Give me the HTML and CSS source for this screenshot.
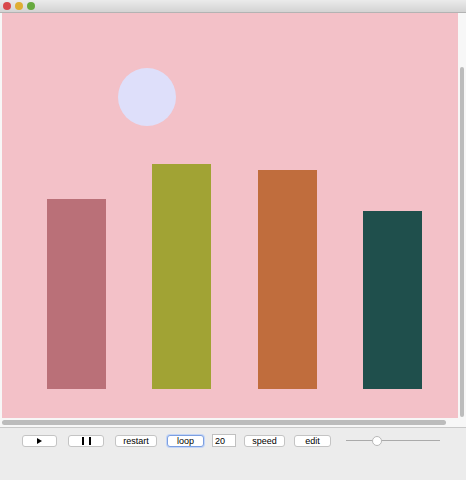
FILE: index.html
```html
<!DOCTYPE html>
<html>
<head>
<meta charset="utf-8">
<link rel="stylesheet" href="styles.css">
</head>
<body>
<div class="window">
  <div class="titlebar">
    <span class="light red"></span>
    <span class="light yellow"></span>
    <span class="light green"></span>
  </div>
  <div class="scrollpane">
    <div class="viewcol">
      <div class="canvas">
        <div class="shape circle"></div>
        <div class="shape bar bar1"></div>
        <div class="shape bar bar2"></div>
        <div class="shape bar bar3"></div>
        <div class="shape bar bar4"></div>
      </div>
      <div class="hscroll"><div class="hthumb"></div></div>
    </div>
    <div class="vscroll"><div class="vthumb"></div></div>
  </div>
  <div class="controls">
    <button class="btn w-play"><span class="play-icon"></span></button>
    <button class="btn w-pause ml11"><span class="pause-icon"><i></i><i></i></span></button>
    <button class="btn w-restart ml11">restart</button>
    <button class="btn w-loop focused ml10">loop</button>
    <input class="field ml8" type="text" value="20">
    <button class="btn w-speed ml8">speed</button>
    <button class="btn w-edit ml9">edit</button>
    <div class="slider ml15"><div class="track"></div><div class="knob"></div></div>
  </div>
</div>
</body>
</html>
```
FILE: styles.css
```css
* { box-sizing: border-box; }
html, body { margin: 0; padding: 0; }
body {
  width: 466px;
  height: 480px;
  overflow: hidden;
  font-family: "Liberation Sans", Arial, sans-serif;
  background: #ececec;
}
.window {
  width: 466px;
  height: 480px;
  display: flex;
  flex-direction: column;
}
.titlebar {
  height: 13px;
  background: linear-gradient(#ebebeb, #d3d3d3);
  border-bottom: 1px solid #b3b3b3;
  display: flex;
  align-items: center;
  padding-left: 3px;
  gap: 4px;
}
.light {
  width: 8px;
  height: 8px;
  border-radius: 50%;
  display: block;
}
.red { background: #d8484a; }
.yellow { background: #dfae32; }
.green { background: #67a93e; }

.scrollpane {
  height: 415px;
  display: flex;
  background: #f7f7f7;
  border-bottom: 1px solid #c9c9c9;
}
.viewcol {
  width: 458px;
  display: flex;
  flex-direction: column;
  padding-left: 2px;
}
.canvas {
  position: relative;
  height: 405px;
  background: #f3c1c8;
  overflow: hidden;
}
.shape { position: absolute; }
.circle {
  left: 116px;
  top: 55px;
  width: 58px;
  height: 58px;
  border-radius: 50%;
  background: #dedffa;
}
.bar { bottom: 29px; width: 59px; }
.bar1 { left: 45px; height: 190px; background: #ba7078; }
.bar2 { left: 150px; height: 225px; background: #a1a334; }
.bar3 { left: 256px; height: 219px; background: #c06d3d; }
.bar4 { left: 361px; height: 178px; background: #1f4f4c; }

.hscroll {
  flex: 1;
  display: flex;
  align-items: center;
}
.hthumb {
  width: 444px;
  height: 5px;
  border-radius: 3px;
  background: #bcbcbc;
}
.vscroll {
  flex: 1;
  padding: 54px 0 0 2px;
}
.vthumb {
  width: 4px;
  height: 350px;
  border-radius: 3px;
  background: #bcbcbc;
}

.controls {
  display: flex;
  align-items: center;
  padding: 5px 0 0 22px;
  height: 20px;
}
.btn {
  height: 12px;
  padding: 0;
  background: #ffffff;
  border: 1px solid #c4c4c4;
  border-radius: 3px;
  font-family: "Liberation Sans", Arial, sans-serif;
  font-size: 9px;
  line-height: 10px;
  color: #000;
  display: flex;
  align-items: center;
  justify-content: center;
}
.focused {
  border: 1px solid #7d9fe0;
  box-shadow: 0 0 0 1px #c3d5f6;
}
.w-play { width: 35px; }
.w-pause { width: 36px; }
.w-restart { width: 42px; }
.w-loop { width: 37px; }
.w-speed { width: 41px; }
.w-edit { width: 37px; }
.ml8 { margin-left: 8px; }
.ml9 { margin-left: 9px; }
.ml10 { margin-left: 10px; }
.ml11 { margin-left: 11px; }
.ml15 { margin-left: 15px; }

.play-icon {
  width: 0;
  height: 0;
  border-top: 3px solid transparent;
  border-bottom: 3px solid transparent;
  border-left: 5px solid #000;
}
.pause-icon {
  display: flex;
  gap: 5px;
}
.pause-icon i {
  display: block;
  width: 2px;
  height: 8px;
  background: #000;
}
.field {
  width: 24px;
  height: 13px;
  padding: 0 0 0 2px;
  border: 1px solid #c0c0c0;
  background: #fff;
  font-family: "Liberation Sans", Arial, sans-serif;
  font-size: 9px;
  color: #000;
  outline: none;
}
.slider {
  position: relative;
  width: 94px;
  height: 10px;
  display: flex;
  align-items: center;
}
.track {
  width: 100%;
  height: 1px;
  background: #aaaaaa;
}
.knob {
  position: absolute;
  left: 26px;
  top: 0;
  width: 10px;
  height: 10px;
  border-radius: 50%;
  background: #fff;
  border: 1px solid #b8b8b8;
}
```
